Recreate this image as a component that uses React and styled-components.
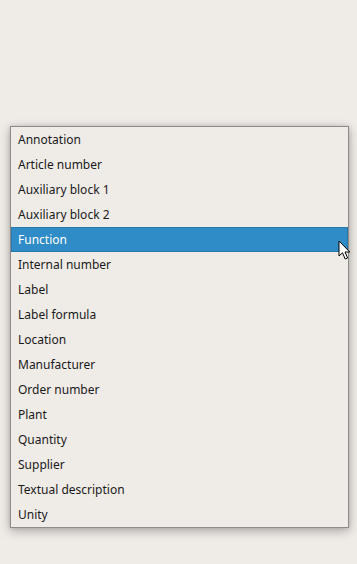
import React from "react";
import styled, { createGlobalStyle } from "styled-components";

const Global = createGlobalStyle`
  html, body { margin: 0; padding: 0; background: #efebe7; }
  body { font-family: "Noto Sans", "DejaVu Sans", sans-serif; }
`;

const Page = styled.div`
  width: 357px;
  height: 564px;
  position: relative;
  padding: 126px 0 0 10px;
  box-sizing: border-box;
`;

const Menu = styled.div`
  width: 339px;
  box-sizing: border-box;
  border: 1px solid #8d8b89;
  background: #efebe7;
  box-shadow: 0 3px 10px rgba(0, 0, 0, 0.28), 0 0 4px rgba(0, 0, 0, 0.12);
  display: flex;
  flex-direction: column;
`;

const Item = styled.div`
  height: 25px;
  box-sizing: border-box;
  display: flex;
  align-items: center;
  padding-left: ${(p) => (p.$active ? "6px" : "7px")};
  font-size: 12px;
  color: ${(p) => (p.$active ? "#ffffff" : "#1a1a1a")};
  background: ${(p) => (p.$active ? "#308cc6" : "transparent")};
  border: ${(p) => (p.$active ? "1px solid #2a78aa" : "none")};
  white-space: nowrap;
`;

const Cursor = styled.svg`
  position: absolute;
  left: 338px;
  top: 240px;
`;

const items = [
  "Annotation",
  "Article number",
  "Auxiliary block 1",
  "Auxiliary block 2",
  "Function",
  "Internal number",
  "Label",
  "Label formula",
  "Location",
  "Manufacturer",
  "Order number",
  "Plant",
  "Quantity",
  "Supplier",
  "Textual description",
  "Unity",
];

export default function App() {
  return (
    <Page>
      <Global />
      <Menu>
        {items.map((t) => (
          <Item key={t} $active={t === "Function"}>
            {t}
          </Item>
        ))}
      </Menu>
      <Cursor width="14" height="21" viewBox="0 0 14 21">
        <path
          d="M1 1 L1 16 L4.5 12.8 L7.2 19 L9.6 18 L7 12 L11.8 12 Z"
          fill="#ffffff"
          stroke="#000000"
          strokeWidth="1"
          strokeLinejoin="round"
        />
      </Cursor>
    </Page>
  );
}
